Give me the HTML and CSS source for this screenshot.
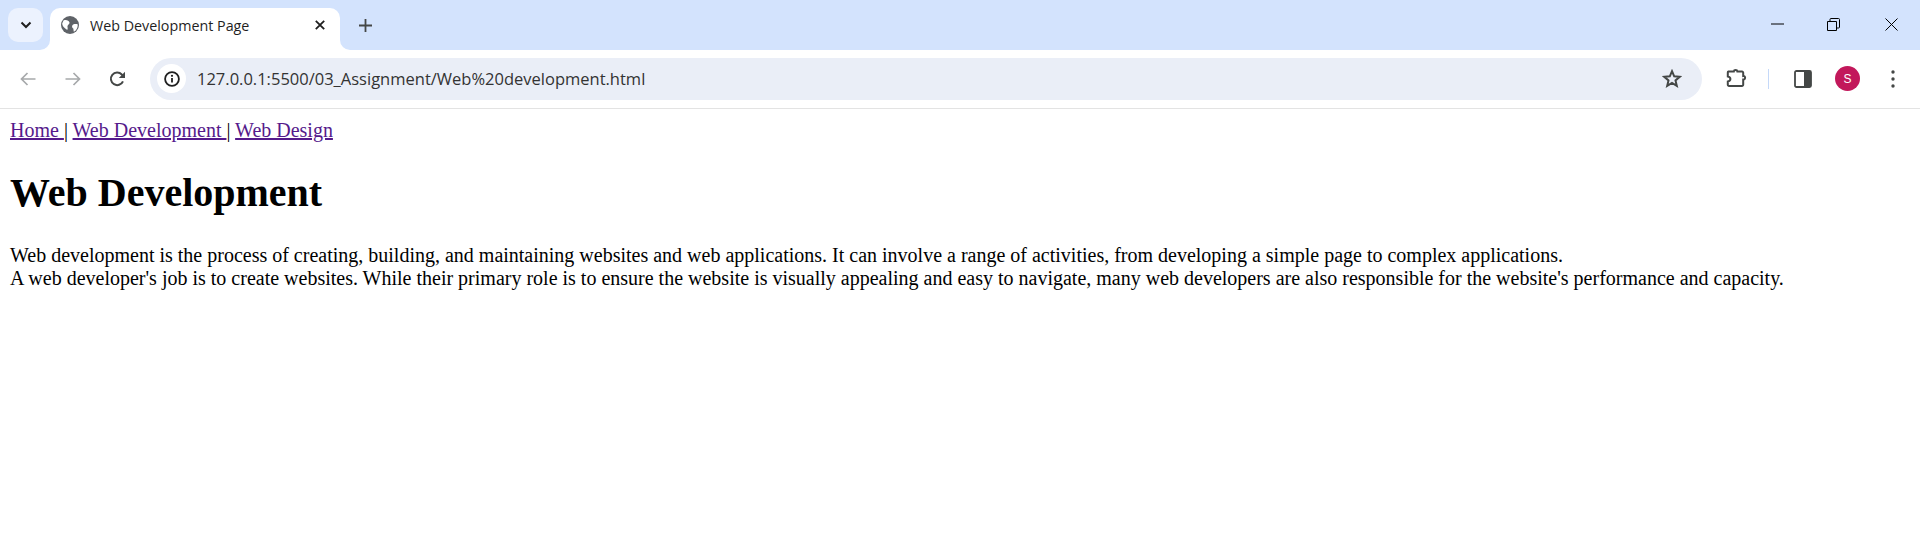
FILE: index.html
```html
<!DOCTYPE html>
<html lang="en">
<head>
<meta charset="utf-8">
<title>Web Development Page</title>
<link rel="stylesheet" href="styles.css">
</head>
<body>
<header class="chrome">
  <div class="tabstrip">
    <div class="tabgroup">
      <button class="tabsearch" aria-label="Search tabs">
        <svg width="12" height="8" viewBox="0 0 12 8"><path d="M1.500 1.500 6 6l4.500-4.500" fill="none" stroke="#1f1f1f" stroke-width="2"/></svg>
      </button>
      <div class="tab">
        <svg class="favicon" width="18" height="18" viewBox="0 0 18 18"><circle cx="9" cy="9" r="9" fill="#5f6368"/><path d="M2.500 4.500C5 3.300 8 4.500 8.500 6.500 8.800 8 7 8.500 6.500 10 6.300 11 7 12 6.500 13.800 4 13 1.200 10 1.200 7.500zM16.800 8.500c-2-.8-4.500-.5-5.500 1-.6 1 0 2.500 1 3l.5 3.300c2.500-1 4-4 4-7.300z" fill="#fff"/></svg>
        <span class="tabtitle">Web Development Page</span>
        <svg class="tabclose" width="10" height="10" viewBox="0 0 10 10"><path d="M.8.8l8.400 8.400M9.200.8.800 9.200" fill="none" stroke="#1f1f1f" stroke-width="1.800"/></svg>
      </div>
      <button class="newtab" aria-label="New tab">
        <svg width="13" height="13" viewBox="0 0 13 13"><path d="M6.500 0v13M0 6.500h13" fill="none" stroke="#444746" stroke-width="1.800"/></svg>
      </button>
    </div>
    <div class="winctrls">
      <button class="winbtn minbtn" aria-label="Minimize"><svg width="13" height="2" viewBox="0 0 13 2"><path d="M0 1h13" stroke="#000" stroke-width="1"/></svg></button>
      <button class="winbtn" aria-label="Restore"><svg width="13" height="13" viewBox="0 0 13 13"><path d="M.5 3.500h9v9h-9zM3 3.500V1.500a1 1 0 0 1 1-1h7.500a1 1 0 0 1 1 1V9a1 1 0 0 1-1 1H9.500" fill="none" stroke="#000"/></svg></button>
      <button class="winbtn" aria-label="Close"><svg width="13" height="13" viewBox="0 0 13 13"><path d="M.5.500l12 12M12.500.500l-12 12" fill="none" stroke="#000"/></svg></button>
    </div>
  </div>
  <div class="toolbar">
    <button class="tool" aria-label="Back"><svg width="16" height="14" viewBox="0 0 16 14"><path d="M15.500 7H1.800M7.500 1 1.500 7l6 6" fill="none" stroke="#a7a9ab" stroke-width="1.700"/></svg></button>
    <button class="tool" aria-label="Forward"><svg width="16" height="14" viewBox="0 0 16 14"><path d="M.5 7h13.700M8.500 1l6 6-6 6" fill="none" stroke="#a7a9ab" stroke-width="1.700"/></svg></button>
    <button class="tool" aria-label="Reload"><svg width="17" height="16" viewBox="0 0 17 16"><path d="M14 10.300A6.300 6.300 0 1 1 12.800 3.500L14.400 5" fill="none" stroke="#444746" stroke-width="2"/><path d="M16 .8v6.200H9.800z" fill="#444746"/></svg></button>
    <div class="omnibox">
      <span class="siteinfo">
        <svg width="16" height="16" viewBox="0 0 16 16"><circle cx="8" cy="8" r="6.900" fill="none" stroke="#1f1f1f" stroke-width="1.800"/><path d="M8 7v4.500" stroke="#1f1f1f" stroke-width="1.800"/><circle cx="8" cy="4.800" r="1.100" fill="#1f1f1f"/></svg>
      </span>
      <span class="url">127.0.0.1:5500/03_Assignment/Web%20development.html</span>
      <svg class="star" width="20" height="19" viewBox="0 0 20 19"><path d="M10 2.200l2.200 5.100 5.500.5-4.200 3.600 1.300 5.400L10 13.900l-4.800 2.900 1.300-5.400-4.200-3.600 5.500-.5z" fill="none" stroke="#444746" stroke-width="2"/></svg>
    </div>
    <button class="tool ext" aria-label="Extensions"><svg width="21" height="21" viewBox="0 0 21 21"><path d="M2.500 3.500H7.800c.2-2 3.400-2 3.600 0H16a1.200 1.200 0 0 1 1.200 1.200V8c2.500-.4 2.500 4 0 3.600v5.200A1.200 1.200 0 0 1 16 18H3a1.200 1.200 0 0 1-1.200-1.200v-3.300c2-.3 2.600-1.300 2.600-2.500S3.800 8.800 1.800 8.500V4.700A1.200 1.200 0 0 1 2.500 3.500z" fill="none" stroke="#444746" stroke-width="2"/></svg></button>
    <span class="sep"></span>
    <button class="tool" aria-label="Side panel"><svg width="18" height="18" viewBox="0 0 18 18"><rect x="1" y="1" width="16" height="16" rx="1.500" fill="none" stroke="#444746" stroke-width="1.800"/><rect x="10" y="1" width="7" height="16" fill="#444746"/></svg></button>
    <button class="tool" aria-label="Profile"><span class="avatar">S</span></button>
    <button class="tool" aria-label="Menu"><svg width="4" height="18" viewBox="0 0 4 18"><circle cx="2" cy="2" r="1.700" fill="#444746"/><circle cx="2" cy="9" r="1.700" fill="#444746"/><circle cx="2" cy="16" r="1.700" fill="#444746"/></svg></button>
  </div>
</header>
<main class="page">
  <nav><a href="#home">Home </a>| <a href="#dev">Web Development </a>| <a href="#design">Web Design</a></nav>
  <h1>Web Development</h1>
  <p>Web development is the process of creating, building, and maintaining websites and web applications. It can involve a range of activities, from developing a simple page to complex applications.<br>A web developer's job is to create websites. While their primary role is to ensure the website is visually appealing and easy to navigate, many web developers are also responsible for the website's performance and capacity.</p>
</main>
</body>
</html>
```
FILE: styles.css
```css
* { box-sizing: border-box; }
html, body { margin: 0; height: 100%; background: #fff; overflow: hidden; }
button { border: 0; padding: 0; background: none; display: flex; align-items: center; justify-content: center; }

.chrome { font-family: "Open Sans", "Noto Sans", sans-serif; }

.tabstrip { height: 50px; background: #d3e3fd; display: flex; justify-content: space-between; }
.tabgroup { display: flex; padding: 8px 0 0 8px; }
.tabsearch { width: 35px; height: 34px; background: #ecf2fe; border-radius: 10px; margin-right: 7px; }

.tab { position: relative; width: 290px; height: 42px; background: #fff; border-radius: 10px 10px 0 0; display: flex; align-items: center; padding: 0 0 8px 11px; }
.tab::before, .tab::after { content: ""; position: absolute; bottom: 0; width: 10px; height: 10px; background: #d3e3fd; z-index: 1; }
.tab::before { left: -10px; border-bottom-right-radius: 10px; box-shadow: 3px 3px 0 3px #fff; clip-path: inset(0 -4px -4px 0); }
.tab::after { right: -10px; border-bottom-left-radius: 10px; box-shadow: -3px 3px 0 3px #fff; clip-path: inset(0 0 -4px -4px); }
.favicon { flex: none; }
.tabtitle { flex: 1; margin-left: 11px; font-size: 14.3px; color: #1f1f1f; white-space: nowrap; }
.tabclose { flex: none; margin-right: 15px; }
.newtab { width: 36px; height: 34px; margin-left: 7px; }

.winctrls { display: flex; }
.winbtn { width: 58px; height: 48px; }
.minbtn svg { margin-left: 4px; }

.toolbar { height: 59px; background: #fff; border-bottom: 1px solid #e3e3e3; border-radius: 12px 12px 0 0; display: flex; align-items: center; padding: 0 5px 1px 5px; position: relative; }
.tool { flex: none; width: 45px; height: 44px; }
.omnibox { flex: 1; height: 42px; margin: 0 12px 0 10px; background: #eaeef7; border-radius: 21px; display: flex; align-items: center; padding: 0 20px 0 7px; }
.siteinfo { width: 29px; height: 29px; border-radius: 50%; background: #fff; display: flex; align-items: center; justify-content: center; flex: none; }
.url { flex: 1; margin-left: 11px; font-size: 16.5px; color: #333; white-space: nowrap; }
.star { flex: none; }
.ext { width: 44px; }
.sep { flex: none; width: 1px; height: 20px; background: #c5d9f9; margin: 0 11px 0 10px; }
.avatar { width: 25px; height: 25px; border-radius: 50%; background: #c2185b; color: #fff; font-size: 12px; display: flex; align-items: center; justify-content: center; }

.page { padding: 10px; font-family: "Liberation Serif", "Times New Roman", serif; font-size: 20px; color: #000; }
.page a { color: #551a8b; }
.page h1 { font-size: 40px; margin: 28px 0; line-height: 46px; font-weight: 700; }
.page p { margin: 0; }
```
